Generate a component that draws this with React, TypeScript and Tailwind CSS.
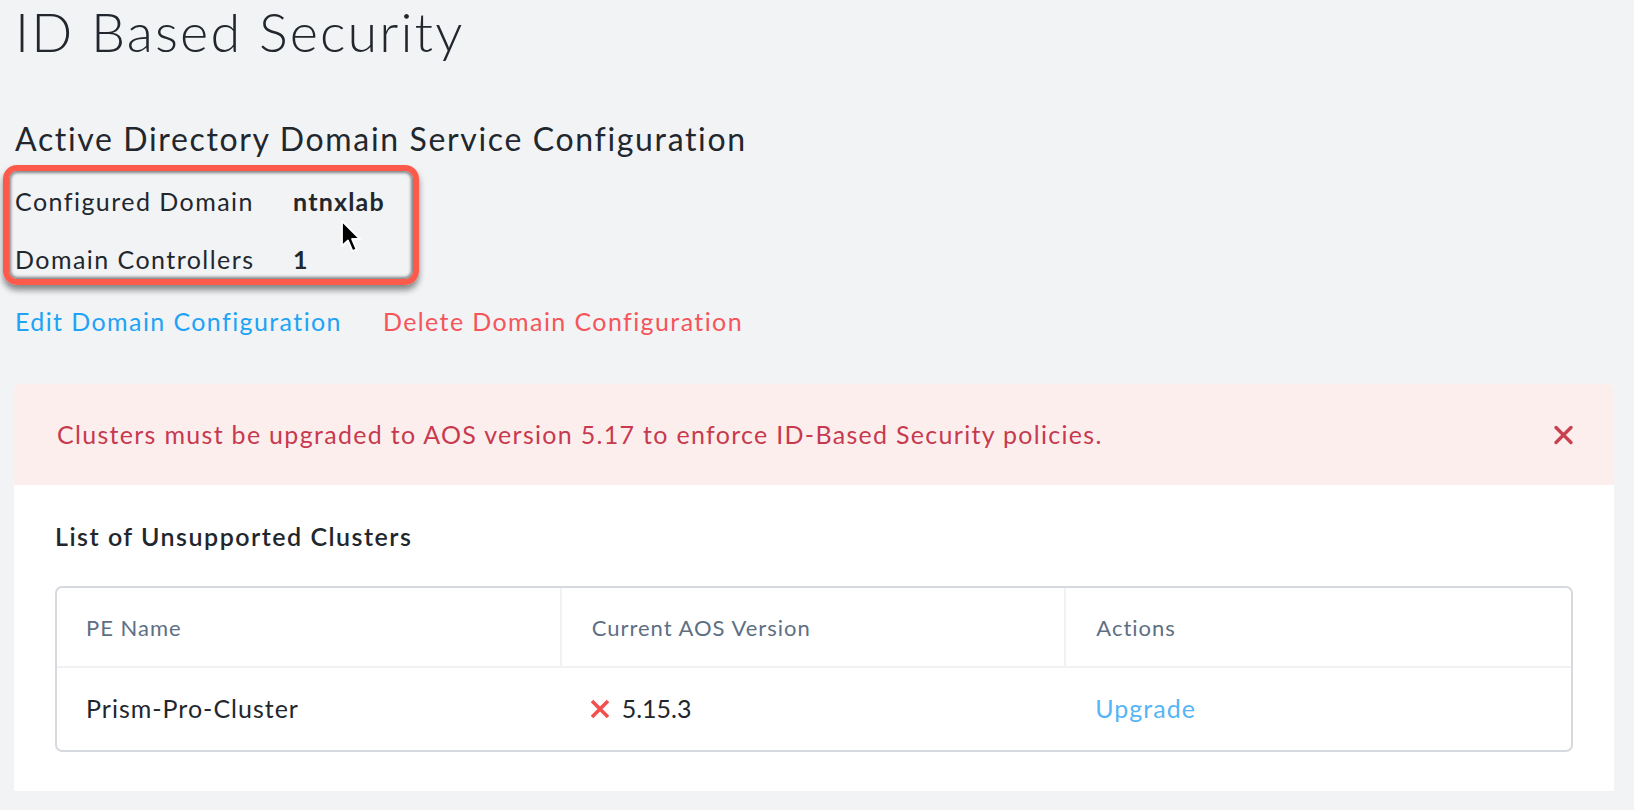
import React from "react";

const font = { fontFamily: "Lato, 'Noto Sans', sans-serif" };

function Cursor() {
  return (
    <svg width="26" height="36" viewBox="0 0 26 36" className="absolute left-[325px] top-[53px]">
      <path d="M2 2 L2 27 L8 21.5 L12.5 32 L16.5 30.3 L12 20 L20 20 Z" fill="#000" stroke="#fff" strokeWidth="1.8" strokeLinejoin="round" />
    </svg>
  );
}

export default function App() {
  return (
    <div className="min-h-[810px] w-full bg-[#f2f3f5] text-[#22272e]" style={font}>
      <div className="pl-[15px] pr-[20px]">
        <h1 className="text-[54px] font-light leading-[64px] tracking-[2.1px]">ID Based Security</h1>
        <h2 className="mt-[55px] text-[32px] font-normal leading-[40px] tracking-[1.65px]">Active Directory Domain Service Configuration</h2>
        <div className="relative mt-[7px] w-fit">
          <div className="grid grid-cols-[278px_auto] gap-y-[26px] pt-[19px] pb-[3px] text-[25px] leading-[32px] tracking-[1.45px]">
            <span>Configured Domain</span>
            <span className="font-bold tracking-[1.2px]">ntnxlab</span>
            <span>Domain Controllers</span>
            <span className="font-bold">1</span>
          </div>
          <div className="pointer-events-none absolute left-[-12px] top-[-1px] h-[120px] w-[416px] rounded-[14px] border-[6px] border-[#fc5a4a] shadow-[inset_0_0_3px_2px_rgba(40,40,40,0.55),0_5px_6px_rgba(0,0,0,0.45)]" />
          <Cursor />
        </div>
        <div className="mt-[27px] flex gap-[41px] text-[25px] leading-[32px] tracking-[1.4px]">
          <span className="text-[#21a3f5]">Edit Domain Configuration</span>
          <span className="text-[#f5555a]">Delete Domain Configuration</span>
        </div>
      </div>
      <div className="ml-[14px] mr-[20px] mt-[47px] rounded-t-[6px] bg-white">
        <div className="flex h-[101px] items-center justify-between rounded-t-[6px] bg-[#fdeeee] pl-[43px] pr-[40px]">
          <span className="text-[25px] tracking-[1.3px] text-[#c73a4e]">Clusters must be upgraded to AOS version 5.17 to enforce ID-Based Security policies.</span>
          <svg width="21" height="20" viewBox="0 0 21 20">
            <path d="M3 2.5 L18 17.5 M18 2.5 L3 17.5" stroke="#c9404f" strokeWidth="3.4" strokeLinecap="round" />
          </svg>
        </div>
        <div className="px-[41px] pb-[39px] pt-[36px]">
          <h3 className="text-[25px] font-semibold leading-[30px] tracking-[1.5px] text-[#22272e]">List of Unsupported Clusters</h3>
          <div className="mt-[35px] rounded-[7px] border-2 border-[#d6dade]">
            <div className="grid h-[80px] grid-cols-3 border-b-2 border-[#f1f2f3] text-[22px] tracking-[1px] text-[#5e6f84]">
              <div className="flex items-center border-r-2 border-[#f1f2f3] pl-[29px]">PE Name</div>
              <div className="flex items-center border-r-2 border-[#f1f2f3] pl-[30px]">Current AOS Version</div>
              <div className="flex items-center pl-[30px]">Actions</div>
            </div>
            <div className="grid h-[82px] grid-cols-3 text-[25px] tracking-[1px]">
              <div className="flex items-center pl-[29px] text-[#22272e]">Prism-Pro-Cluster</div>
              <div className="flex items-center gap-[11px] pl-[27px] text-[#22272e]">
                <svg width="22" height="22" viewBox="0 0 22 22">
                  <path d="M3 3 L19 19 M19 3 L3 19" stroke="#f2504f" strokeWidth="3.6" strokeLinecap="butt" />
                </svg>
                <span className="tracking-[0px]">5.15.3</span>
              </div>
              <div className="flex items-center pl-[29px] text-[#55b5f6]">Upgrade</div>
            </div>
          </div>
        </div>
      </div>
    </div>
  );
}
